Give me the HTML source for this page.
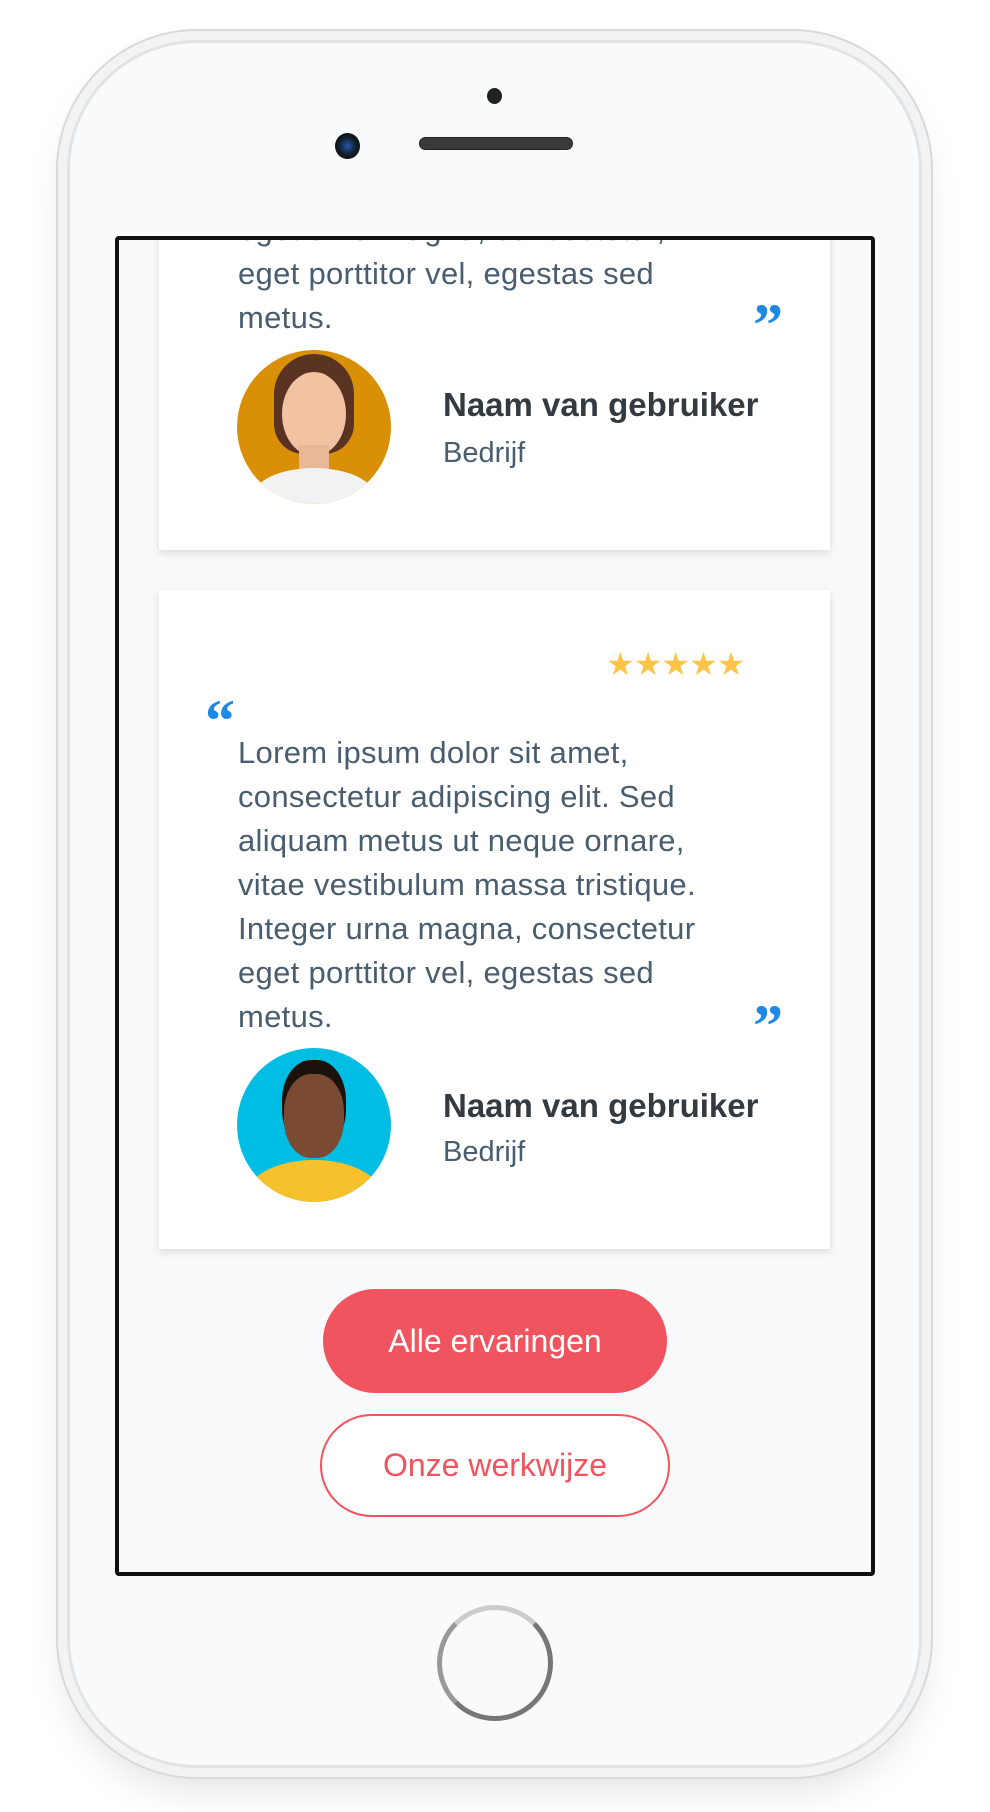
<!DOCTYPE html>
<html><head><meta charset="utf-8"><style>
*{margin:0;padding:0;box-sizing:border-box}
body{width:990px;height:1812px;background:#fff;position:relative;overflow:hidden;font-family:"Liberation Sans",sans-serif}
.phone{position:absolute;left:67px;top:40px;width:855px;height:1728px;border-radius:130px;background:#f9fafc;border:3px solid #e2e3e5;box-shadow:0 0 0 9px #f3f3f4,0 0 0 11px #d9d9db,0 20px 40px rgba(0,0,0,.12)}
.btn-side{position:absolute;background:#e4e4e6;border:1px solid #cfcfd2;border-radius:3px;width:7px}
.screen{position:absolute;left:115px;top:236px;width:760px;height:1340px;border:4px solid #111;border-radius:4px;background:#f8f9fb;overflow:hidden}
.card{position:absolute;left:40px;width:671px;background:#fff;box-shadow:0 3px 8px rgba(0,0,0,.12)}
.t{position:absolute;left:79px;font-size:31px;line-height:44px;color:#4a5d6e;white-space:nowrap;letter-spacing:0.3px}
.q{position:absolute;color:#1e88e5;font-size:60px;font-weight:bold;font-family:"Liberation Serif",serif;line-height:1}
.name{position:absolute;left:284px;font-size:33px;font-weight:bold;color:#333a40;white-space:nowrap}
.co{position:absolute;left:284px;font-size:29px;color:#4a5d6e}
.av{position:absolute;left:78px;width:154px;height:154px;border-radius:50%;overflow:hidden}
.btn{position:absolute;border-radius:52px;display:flex;align-items:center;justify-content:center;font-size:32px}
</style></head><body>
<div class="btn-side" style="left:61px;top:245px;height:60px"></div>
<div class="btn-side" style="left:61px;top:372px;height:110px"></div>
<div class="btn-side" style="left:61px;top:510px;height:110px"></div>
<div class="btn-side" style="left:920px;top:372px;height:112px"></div>
<div class="phone"></div>
<div style="position:absolute;left:487px;top:88px;width:15px;height:16px;border-radius:50%;background:#222"></div>
<div style="position:absolute;left:335px;top:133px;width:25px;height:26px;border-radius:50%;background:radial-gradient(circle at 50% 50%,#2a55b0 0,#123 45%,#111 70%,#333 100%)"></div>
<div style="position:absolute;left:419px;top:137px;width:154px;height:13px;border-radius:7px;background:#3a3a3a;border:1px solid #222"></div>
<div style="position:absolute;left:437px;top:1605px;width:116px;height:116px;border-radius:50%;border:5px solid #777;border-top-color:#ccc;border-left-color:#999"></div>

<div class="screen">
 <div class="card" style="top:-40px;height:350px">
  <div class="t" style="top:8px">eget urna magna, consectetur,</div>
  <div class="t" style="top:52px">eget porttitor vel, egestas sed</div>
  <div class="t" style="top:96px">metus.</div>
  <div class="q" style="left:594px;top:95px">”</div>
  <div class="av" style="top:150px;background:#d98f06">
   <div style="position:absolute;left:37px;top:4px;width:80px;height:100px;border-radius:40px 40px 30px 30px;background:#5a3322"></div>
   <div style="position:absolute;left:45px;top:22px;width:64px;height:84px;border-radius:50%;background:#f1c3a3"></div>
   <div style="position:absolute;left:62px;top:95px;width:30px;height:30px;background:#eab797"></div>
   <div style="position:absolute;left:15px;top:118px;width:124px;height:60px;border-radius:50% 50% 0 0;background:#f2f2f2"></div>
  </div>
  <div class="name" style="top:186px">Naam van gebruiker</div>
  <div class="co" style="top:237px">Bedrijf</div>
 </div>

 <div class="card" style="top:350px;height:659px">
  <div style="position:absolute;left:447px;top:55px;color:#fcc54a;font-size:32px;letter-spacing:-1px">★★★★★</div>
  <div class="q" style="left:46px;top:101px">“</div>
  <div class="t" style="top:141px">Lorem ipsum dolor sit amet,</div>
  <div class="t" style="top:185px">consectetur adipiscing elit. Sed</div>
  <div class="t" style="top:229px">aliquam metus ut neque ornare,</div>
  <div class="t" style="top:273px">vitae vestibulum massa tristique.</div>
  <div class="t" style="top:317px">Integer urna magna, consectetur</div>
  <div class="t" style="top:361px">eget porttitor vel, egestas sed</div>
  <div class="t" style="top:405px">metus.</div>
  <div class="q" style="left:594px;top:406px">”</div>
  <div class="av" style="top:458px;background:#00bde3">
   <div style="position:absolute;left:45px;top:12px;width:64px;height:90px;border-radius:45%;background:#1b120e"></div>
   <div style="position:absolute;left:47px;top:26px;width:60px;height:84px;border-radius:45%;background:#7a4a32"></div>
   <div style="position:absolute;left:10px;top:112px;width:134px;height:70px;border-radius:50% 50% 0 0;background:#f7c12b"></div>
  </div>
  <div class="name" style="top:497px">Naam van gebruiker</div>
  <div class="co" style="top:546px">Bedrijf</div>
 </div>

 <div class="btn" style="left:204px;top:1049px;width:344px;height:104px;background:#f0545e;color:#fff">Alle ervaringen</div>
 <div class="btn" style="left:201px;top:1174px;width:350px;height:103px;border:2px solid #f0545e;color:#f0545e;background:#fff">Onze werkwijze</div>
</div>
</body></html>
